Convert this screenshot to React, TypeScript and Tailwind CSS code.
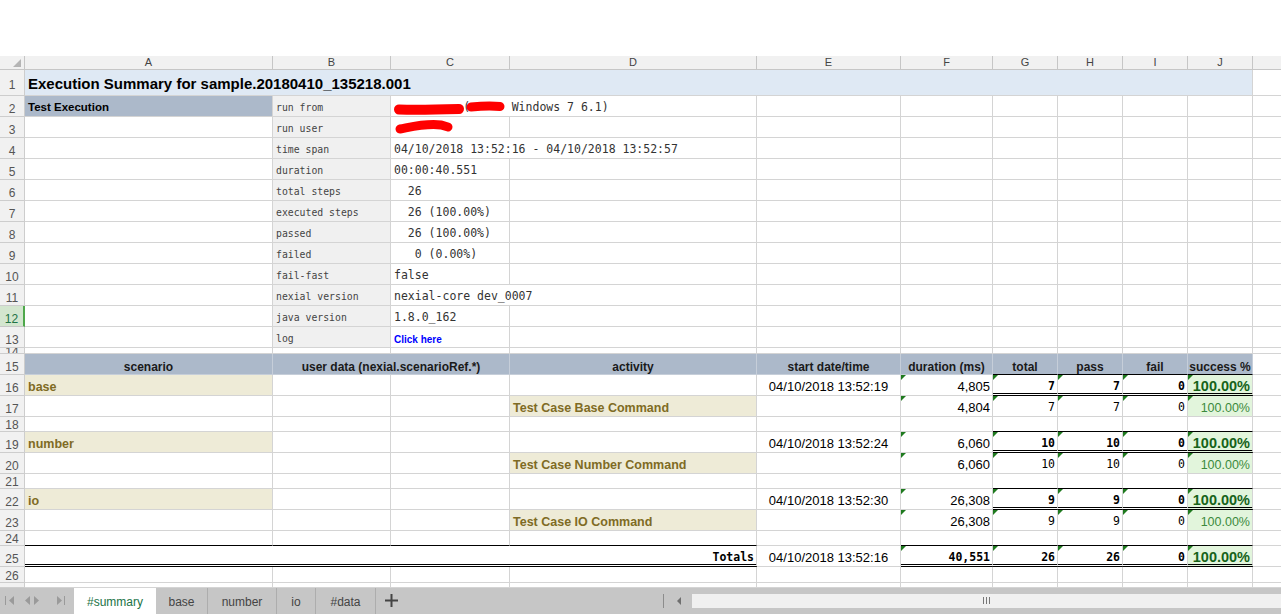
import React from "react";

const GRID =
  "grid grid-cols-[25px_248px_118px_119px_247px_144px_92px_65px_65px_65px_65px_1fr]";
const SANS = "font-['Liberation_Sans',Arial,sans-serif]";
const MONO = "font-['DejaVu_Sans_Mono','Liberation_Mono',monospace]";

const GRIDB = "border-r border-b border-[#d4d4d4]";
const BLK = "border-r border-b border-r-[#d4d4d4] border-b-black";
const DBLB = "border-r border-b-[3px] border-double border-r-[#d4d4d4] border-b-black";
const HDRB = "border-r border-b border-[#c6ced9]";
const HDRBLK = "border-r border-b border-r-[#c6ced9] border-b-black";

type CP = { cls?: string; b?: string; children?: React.ReactNode; tri?: boolean; pt?: string };

function C({ cls = "", b = GRIDB, children, tri = false, pt = "pt-[4px]" }: CP) {
  return (
    <div className={`relative flex items-center overflow-hidden whitespace-pre ${pt} ${b} ${cls}`}>
      {tri && (
        <span className="absolute left-0 top-0 h-0 w-0 border-t-[5px] border-r-[5px] border-t-[#1f7a1f] border-r-transparent" />
      )}
      {children}
    </div>
  );
}

function Row({
  h,
  n,
  active = false,
  children,
  labelCls = "items-center pt-[5px]",
}: {
  h: string;
  n?: React.ReactNode;
  active?: boolean;
  children?: React.ReactNode;
  labelCls?: string;
}) {
  return (
    <div className={`${GRID} ${h}`}>
      <div
        className={`flex justify-center overflow-hidden border-b text-[12px] leading-[14px] ${SANS} ${labelCls} ${
          active
            ? "border-r-2 border-b-[#c6c6c6] border-r-[#4ea84b] bg-[#d3e6cf] text-[#217346]"
            : "border-r border-[#cdcdcd] bg-[#f1f1f1] text-[#555]"
        }`}
      >
        {n}
      </div>
      {children}
      <div className="border-b border-[#d4d4d4]" />
    </div>
  );
}

const BCELL = `bg-[#f0f0f0] pl-[3px] text-[9.8px] text-[#444] ${MONO}`;
const CTXT = `pl-[3px] text-[11.5px] text-[#333] ${MONO}`;

function Empty({ count, b = GRIDB }: { count: number; b?: string }) {
  return (
    <>
      {Array.from({ length: count }).map((_, i) => (
        <C key={i} b={b} />
      ))}
    </>
  );
}

function InfoRow({
  n,
  label,
  value,
  span = false,
  first,
  active = false,
}: {
  n: number;
  label: string;
  value?: React.ReactNode;
  span?: boolean;
  first?: React.ReactNode;
  active?: boolean;
}) {
  return (
    <Row h="h-[21px]" n={n} active={active}>
      {first ?? <C />}
      <C cls={BCELL}>{label}</C>
      {span ? (
        <C cls={`col-span-2 ${CTXT}`}>{value}</C>
      ) : (
        <>
          <C cls={CTXT}>{value}</C>
          <C />
        </>
      )}
      <Empty count={6} />
    </Row>
  );
}

const SCEN = `bg-[#eeebd7] pl-[3px] font-bold text-[12.5px] text-[#7f6b24] ${SANS}`;
const DATE = `justify-center text-[13px] text-black ${SANS}`;
const DUR = `justify-end pr-[2px] text-[13px] text-black ${SANS}`;
const NUMB = `justify-end pr-[2px] font-bold text-[11.5px] text-black ${MONO}`;
const NUMR = `justify-end pr-[2px] text-[11.5px] text-black ${MONO}`;
const PCTB = `justify-end pr-[2px] bg-[#e2f5dc] font-bold text-[14.5px] text-[#17631a] ${SANS}`;
const PCTR = `justify-end pr-[2px] bg-[#e2f5dc] text-[12.5px] text-[#3c8a3c] ${SANS}`;
const HDR = `bg-[#acb9ca] justify-center font-bold text-[12px] text-[#1a1a1a] ${SANS}`;

function ScenRow({
  n,
  name,
  date,
  dur,
  tot,
  pass,
  fail,
}: {
  n: number;
  name: string;
  date: string;
  dur: string;
  tot: string;
  pass: string;
  fail: string;
}) {
  return (
    <Row h="h-[21px]" n={n}>
      <C cls={SCEN}>{name}</C>
      <Empty count={3} />
      <C cls={DATE}>{date}</C>
      <C cls={DUR} tri>
        {dur}
      </C>
      <C cls={NUMB} b={DBLB} tri pt="pt-[5px]">
        {tot}
      </C>
      <C cls={NUMB} b={DBLB} tri pt="pt-[5px]">
        {pass}
      </C>
      <C cls={NUMB} b={DBLB} tri pt="pt-[5px]">
        {fail}
      </C>
      <C cls={PCTB} b={DBLB} tri pt="pt-[5px]">
        100.00%
      </C>
    </Row>
  );
}

function ActRow({
  n,
  act,
  dur,
  tot,
  pass,
  fail,
}: {
  n: number;
  act: string;
  dur: string;
  tot: string;
  pass: string;
  fail: string;
}) {
  return (
    <Row h="h-[21px]" n={n}>
      <Empty count={3} />
      <C cls={SCEN}>{act}</C>
      <C />
      <C cls={DUR} tri>
        {dur}
      </C>
      <C cls={NUMR} tri>
        {tot}
      </C>
      <C cls={NUMR} tri>
        {pass}
      </C>
      <C cls={NUMR} tri>
        {fail}
      </C>
      <C cls={PCTR} tri>
        100.00%
      </C>
    </Row>
  );
}

function GapRow({ n }: { n: number }) {
  return (
    <Row h="h-[15px]" n={n} labelCls="items-center pt-[1px]">
      <Empty count={6} />
      <Empty count={4} b={BLK} />
    </Row>
  );
}

export default function App() {
  const letters = ["A", "B", "C", "D", "E", "F", "G", "H", "I", "J"];
  return (
    <div className="h-[614px] w-[1281px] overflow-hidden bg-white">
      <div className="h-[56px] bg-white" />

      {/* column headers */}
      <div className={`${GRID} h-[14px] bg-[#f1f1f1] text-[11px] text-[#444] ${SANS}`}>
        <div className="relative border-b border-r border-[#c6c6c6]">
          <svg className="absolute bottom-[2px] right-[3px]" width="8" height="8" viewBox="0 0 8 8">
            <path d="M8 0 L8 8 L0 8Z" fill="#b5b5b5" />
          </svg>
        </div>
        {letters.map((l) => (
          <div
            key={l}
            className="flex items-center justify-center border-b border-r border-[#c6c6c6] leading-[13px]"
          >
            {l}
          </div>
        ))}
        <div className="overflow-hidden border-b border-[#c6c6c6]">
          <div className="w-[64px] text-center leading-[13px]">K</div>
        </div>
      </div>

      {/* row 1 */}
      <Row h="h-[26px]" n={1}>
        <C cls={`col-span-10 bg-[#dfe9f4] pl-[3px] font-bold text-[15px] text-black ${SANS}`}>
          Execution Summary for sample.20180410_135218.001
        </C>
      </Row>

      <InfoRow
        n={2}
        label="run from"
        span
        first={
          <C cls={`bg-[#acb9ca] pl-[3px] font-bold text-[11.5px] text-black ${SANS}`}>
            Test Execution
          </C>
        }
        value={
          <>
            <span>{"          (      Windows 7 6.1)"}</span>
            <svg className="absolute left-0 top-0" width="130" height="21" viewBox="0 0 130 21">
              <path
                d="M8 13.5 C 25 14, 50 13.5, 68 13"
                stroke="#ff0000"
                strokeWidth="10"
                strokeLinecap="round"
                fill="none"
              />
              <path
                d="M80 11 C 90 10, 100 9.5, 109 10.5"
                stroke="#ff0000"
                strokeWidth="9"
                strokeLinecap="round"
                fill="none"
              />
            </svg>
          </>
        }
      />
      <InfoRow
        n={3}
        label="run user"
        value={
          <svg className="absolute left-0 top-0" width="80" height="21" viewBox="0 0 80 21">
            <path
              d="M9 12 C 20 10, 35 6, 50 8 L 57 10"
              stroke="#ff0000"
              strokeWidth="9"
              strokeLinecap="round"
              fill="none"
            />
          </svg>
        }
      />
      <InfoRow n={4} label="time span" span value="04/10/2018 13:52:16 - 04/10/2018 13:52:57" />
      <InfoRow n={5} label="duration" value="00:00:40.551" />
      <InfoRow n={6} label="total steps" value="  26" />
      <InfoRow n={7} label="executed steps" value="  26 (100.00%)" />
      <InfoRow n={8} label="passed" value="  26 (100.00%)" />
      <InfoRow n={9} label="failed" value="   0 (0.00%)" />
      <InfoRow n={10} label="fail-fast" value="false" />
      <InfoRow n={11} label="nexial version" span value="nexial-core dev_0007" />
      <InfoRow n={12} label="java version" value="1.8.0_162" active />
      <InfoRow
        n={13}
        label="log"
        value={
          <span className={`text-[10px] font-bold text-[#0000ff] ${SANS}`}>Click here</span>
        }
      />

      {/* row 14 */}
      <Row h="h-[6px]" n={<span className="-mt-[3px] block">14</span>} labelCls="items-start">
        <Empty count={10} />
      </Row>

      {/* row 15 header */}
      <Row h="h-[21px]" n={15}>
        <C cls={HDR} b={HDRB} pt="pt-[5px]">
          scenario
        </C>
        <C cls={`col-span-2 ${HDR}`} b={HDRB} pt="pt-[5px]">
          user data (nexial.scenarioRef.*)
        </C>
        <C cls={HDR} b={HDRB} pt="pt-[5px]">
          activity
        </C>
        <C cls={HDR} b={HDRB} pt="pt-[5px]">
          start date/time
        </C>
        <C cls={HDR} b={HDRB} pt="pt-[5px]">
          duration (ms)
        </C>
        <C cls={HDR} b={HDRBLK} pt="pt-[5px]">
          total
        </C>
        <C cls={HDR} b={HDRBLK} pt="pt-[5px]">
          pass
        </C>
        <C cls={HDR} b={HDRBLK} pt="pt-[5px]">
          fail
        </C>
        <C cls={HDR} b={HDRBLK} pt="pt-[5px]">
          success %
        </C>
      </Row>

      <ScenRow n={16} name="base" date="04/10/2018 13:52:19" dur="4,805" tot="7" pass="7" fail="0" />
      <ActRow n={17} act="Test Case Base Command" dur="4,804" tot="7" pass="7" fail="0" />
      <GapRow n={18} />
      <ScenRow n={19} name="number" date="04/10/2018 13:52:24" dur="6,060" tot="10" pass="10" fail="0" />
      <ActRow n={20} act="Test Case Number Command" dur="6,060" tot="10" pass="10" fail="0" />
      <GapRow n={21} />
      <ScenRow n={22} name="io" date="04/10/2018 13:52:30" dur="26,308" tot="9" pass="9" fail="0" />
      <ActRow n={23} act="Test Case IO Command" dur="26,308" tot="9" pass="9" fail="0" />

      {/* row 24 */}
      <Row h="h-[15px]" n={24} labelCls="items-center pt-[1px]">
        <Empty count={4} b={BLK} />
        <C />
        <Empty count={5} b={BLK} />
      </Row>

      {/* row 25 totals */}
      <Row h="h-[21px]" n={25}>
        <C
          cls={`col-span-4 justify-end pr-[2px] font-bold text-[11.5px] text-black ${MONO}`}
          b={DBLB}
          pt="pt-[5px]"
        >
          Totals
        </C>
        <C cls={DATE}>04/10/2018 13:52:16</C>
        <C cls={NUMB} b={DBLB} tri pt="pt-[5px]">
          40,551
        </C>
        <C cls={NUMB} b={DBLB} tri pt="pt-[5px]">
          26
        </C>
        <C cls={NUMB} b={DBLB} tri pt="pt-[5px]">
          26
        </C>
        <C cls={NUMB} b={DBLB} tri pt="pt-[5px]">
          0
        </C>
        <C cls={PCTB} b={DBLB} tri pt="pt-[5px]">
          100.00%
        </C>
      </Row>

      <Row h="h-[16px]" n={26} labelCls="items-center pt-[2px]">
        <Empty count={10} />
      </Row>
      <Row h="h-[4px]" labelCls="items-start">
        <Empty count={10} />
      </Row>

      {/* sheet tabs */}
      <div className={`flex h-[27px] bg-[#c6c6c6] text-[12px] ${SANS}`}>
        <div className="relative w-[74px]">
          <svg className="absolute left-0 top-0" width="74" height="27" viewBox="0 0 74 27">
            <g fill="#9a9a9a">
              <rect x="5" y="9" width="1" height="9" />
              <path d="M14 9 L9 13.5 L14 18Z" />
              <path d="M30 9 L25 13.5 L30 18Z" />
              <path d="M34 9 L39 13.5 L34 18Z" />
              <path d="M57 9 L62 13.5 L57 18Z" />
              <rect x="64" y="9" width="1" height="9" />
            </g>
          </svg>
        </div>
        <div className="flex w-[82px] items-center justify-center bg-white pt-[3px] text-[#217346]">
          #summary
        </div>
        <div className="flex w-[52px] items-center justify-center border-r border-[#adadad] pt-[3px] text-[#444]">
          base
        </div>
        <div className="flex w-[69px] items-center justify-center border-r border-[#adadad] pt-[3px] text-[#444]">
          number
        </div>
        <div className="flex w-[39px] items-center justify-center border-r border-[#adadad] pt-[3px] text-[#444]">
          io
        </div>
        <div className="flex w-[60px] items-center justify-center border-r border-[#adadad] pt-[3px] text-[#444]">
          #data
        </div>
        <div className="flex w-[30px] items-center justify-center">
          <svg width="13" height="13" viewBox="0 0 13 13">
            <rect x="5.5" y="0" width="2" height="13" fill="#444" />
            <rect x="0" y="5.5" width="13" height="2" fill="#444" />
          </svg>
        </div>
        <div className="w-[257px]" />
        <div className="flex w-[29px] items-center">
          <div className="h-[14px] w-px bg-[#8c8c8c]" />
          <svg className="ml-[12px]" width="6" height="8" viewBox="0 0 6 8">
            <path d="M5 0 L1 4 L5 8Z" fill="#6f6f6f" />
          </svg>
        </div>
        <div className="flex flex-1 items-center">
          <div className="flex h-[14px] w-full items-center justify-center bg-[#f0f0f0]">
            <svg width="8" height="7" viewBox="0 0 8 7">
              <rect x="0" y="0" width="1" height="7" fill="#777" />
              <rect x="3" y="0" width="1" height="7" fill="#777" />
              <rect x="6" y="0" width="1" height="7" fill="#777" />
            </svg>
          </div>
        </div>
      </div>
    </div>
  );
}
